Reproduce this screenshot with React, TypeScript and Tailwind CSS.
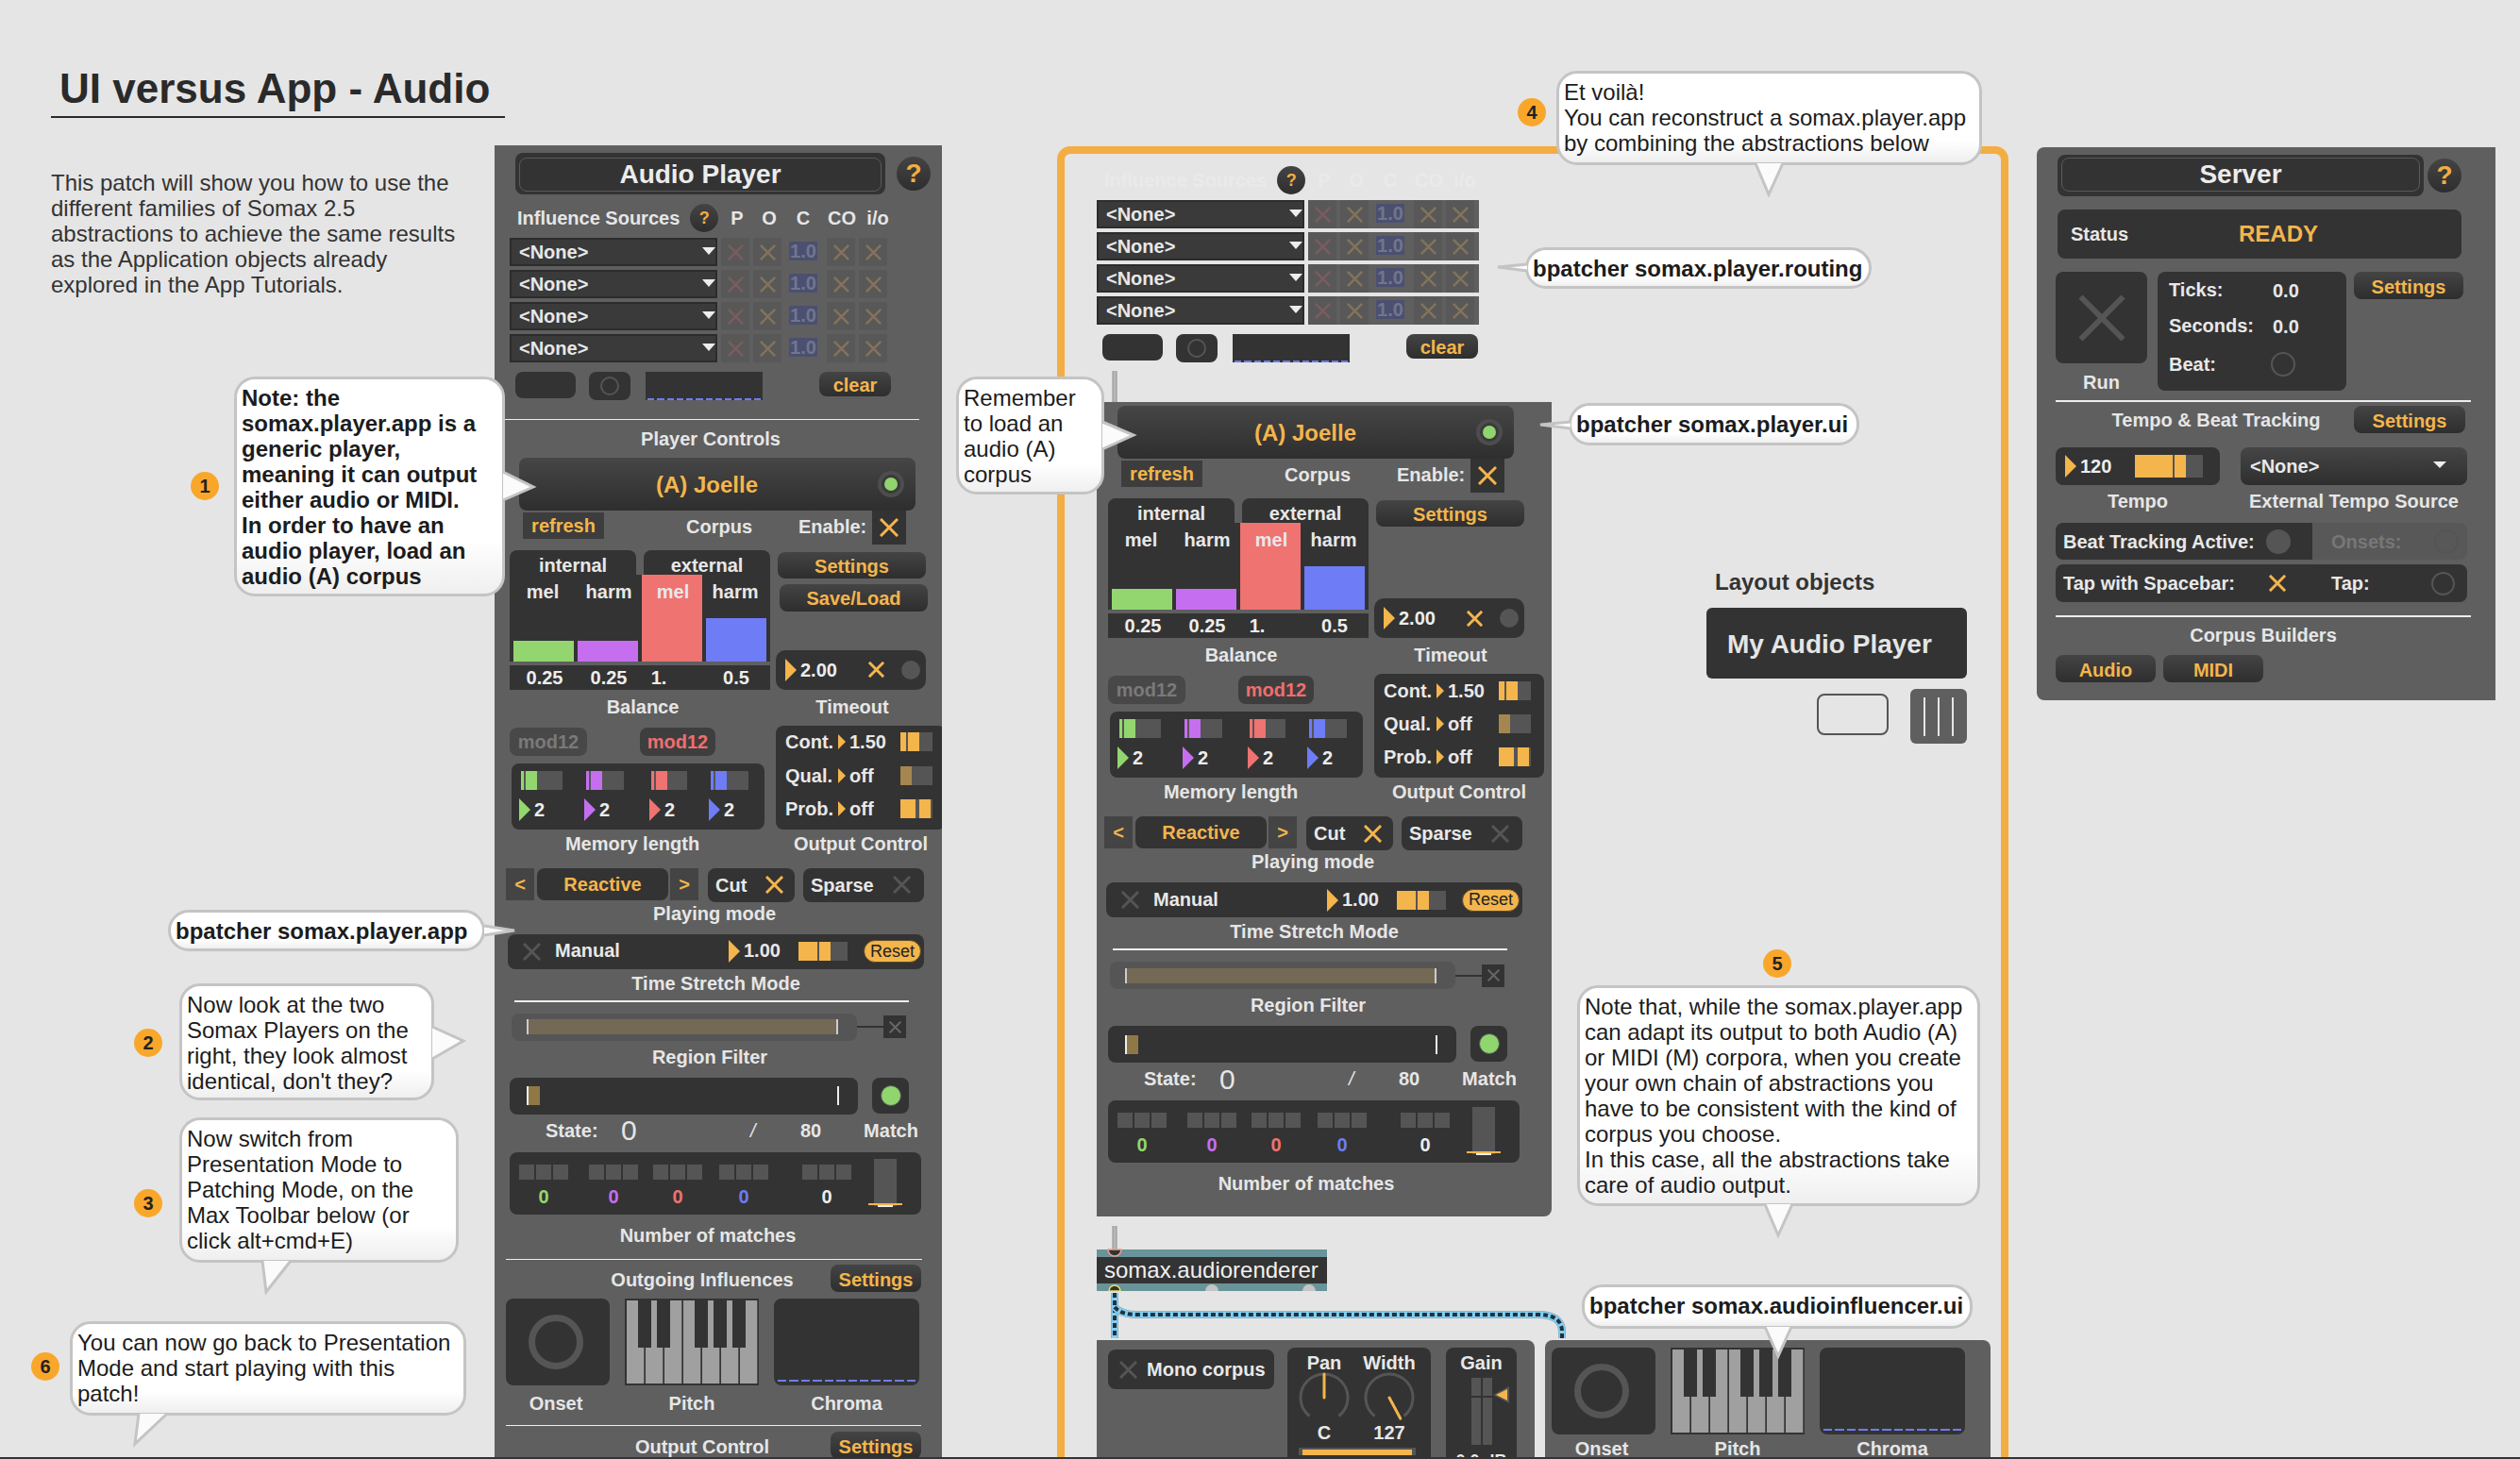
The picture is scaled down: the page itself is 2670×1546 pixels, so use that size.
import type { ReactNode } from "react";

// colours used all over the patch: panel #5f5f5f, controls #333333, accent #f4b54c

function XMark({ size, weight = 3, className }: { size: number; weight?: number; className?: string }) {
  return (
    <svg width={size} height={size} viewBox="0 0 20 20" className={className} aria-hidden="true">
      <path d="M1 1 L19 19 M19 1 L1 19" stroke="currentColor" strokeWidth={(weight * 20) / size} fill="none" />
    </svg>
  );
}

function Tri({ className, w = 12, h = 24 }: { className?: string; w?: number; h?: number }) {
  return (
    <svg width={w} height={h} className={"shrink-0 " + (className ?? "")} aria-hidden="true">
      <polygon points={`0,0 ${w},${h / 2} 0,${h}`} fill="currentColor" />
    </svg>
  );
}

function Caption({ className, children }: { className?: string; children: ReactNode }) {
  return <div className={"h-5 whitespace-nowrap text-center text-[20px] font-bold leading-5 text-[#e6e6e6] " + (className ?? "")}>{children}</div>;
}

function OrangeButton({ className, children }: { className?: string; children: ReactNode }) {
  return (
    <div className={"flex shrink-0 items-center justify-center rounded-lg bg-linear-to-b from-[#444444] to-[#2e2e2e] text-[20px] font-bold text-[#f4b54c] " + (className ?? "")}>
      <span className="translate-y-[1px]">{children}</span>
    </div>
  );
}

function Divider({ className }: { className?: string }) {
  return <div className={"h-[2px] bg-[#ededed] " + (className ?? "")} />;
}

function Ring({ size = 20, className }: { size?: number; className?: string }) {
  return <div style={{ width: size, height: size }} className={"shrink-0 rounded-full border-2 border-[#555555] " + (className ?? "")} />;
}

function Dashes({ className }: { className?: string }) {
  return (
    <div className={"flex gap-[3px] " + (className ?? "")}>
      {Array.from({ length: 12 }).map((_, i) => (
        <div key={i} className="h-[2px] flex-1 bg-[#6e7cf5]" />
      ))}
    </div>
  );
}

function Title({ label, width, textClass }: { label: string; width: string; textClass?: string }) {
  return (
    <div className={"flex h-11 shrink-0 rounded-lg bg-[#333333] p-1 " + width}>
      <div className={"flex flex-1 items-center justify-center rounded-lg border border-[#5a5a5a] text-[28px] font-bold text-[#ececec] " + (textClass ?? "")}>{label}</div>
    </div>
  );
}

function Help({ size }: { size: "lg" | "sm" }) {
  return size === "lg" ? (
    <div className="flex size-9 shrink-0 items-center justify-center rounded-full bg-linear-to-b from-[#444444] to-[#2e2e2e] text-[28px] font-bold text-[#f4ad42]">?</div>
  ) : (
    <div className="flex size-[30px] shrink-0 items-center justify-center rounded-full bg-linear-to-b from-[#444444] to-[#2e2e2e] text-[18px] font-bold text-[#f4ad42]">?</div>
  );
}

function Routing({ faint }: { faint?: boolean }) {
  const head = faint ? "text-[#eaeaea]" : "text-[#e6e6e6]";
  return (
    <div className="flex w-[410px] flex-col">
      <div className={"flex h-[30px] items-center text-[20px] font-bold " + head}>
        <div className="flex w-[224px] items-center pl-2">
          <span className="whitespace-nowrap">Influence Sources</span>
          <span className="ml-[11px]">
            <Help size="sm" />
          </span>
        </div>
        <div className="w-[34px] text-center">P</div>
        <div className="w-[34px] text-center">O</div>
        <div className="w-[38px] text-center">C</div>
        <div className="w-[44px] text-center">CO</div>
        <div className="w-[32px] text-center">i/o</div>
      </div>
      <div className="mt-[6px] flex flex-col gap-1">
        {[0, 1, 2, 3].map((row) => (
          <div key={row} className="flex h-[30px] w-[405px]">
            <div className="relative flex w-[220px] items-center border-2 border-[#2c2c2c] bg-[#3a3a3a] pl-2 text-[20px] font-bold text-[#e8e8e8]">
              &lt;None&gt;
              <svg width="14" height="8" className="absolute right-0 top-[8px]" aria-hidden="true">
                <polygon points="0,0 14,0 7,8" fill="#ededed" />
              </svg>
            </div>
            <div className="ml-1 flex flex-1 bg-[#5f5f5f]">
              <div className="flex w-[30px] items-center justify-center bg-[#585858]">
                <XMark size={17} weight={2.5} className="text-[#7b5c5e]" />
              </div>
              <div className="ml-1 flex w-[30px] items-center justify-center bg-[#585858]">
                <XMark size={17} weight={2.5} className="text-[#83735a]" />
              </div>
              <div className="ml-[8px] flex h-5 w-[30px] translate-y-[4px] items-center justify-center bg-[#4b5070] text-[20px] font-bold text-[#70768c]">1.0</div>
              <div className="ml-[10px] flex w-[30px] items-center justify-center bg-[#585858]">
                <XMark size={17} weight={2.5} className="text-[#83735a]" />
              </div>
              <div className="ml-1 flex w-[30px] items-center justify-center bg-[#585858]">
                <XMark size={17} weight={2.5} className="text-[#83735a]" />
              </div>
            </div>
          </div>
        ))}
      </div>
      <div className="ml-[6px] mt-[10px] flex h-[30px] items-start">
        <div className="h-[28px] w-16 rounded-lg bg-[#333333]" />
        <div className="ml-[14px] flex h-[30px] w-11 items-center justify-center rounded-lg bg-[#333333]">
          <Ring size={20} />
        </div>
        <div className="ml-4 flex h-[30px] w-[124px] flex-col justify-end bg-[#333333] px-[2px]">
          <Dashes />
        </div>
        <OrangeButton className="ml-[60px] h-[26px] w-[76px]">clear</OrangeButton>
      </div>
    </div>
  );
}

function Meter({ children }: { children: ReactNode }) {
  return <div className="flex h-5 shrink-0 bg-[#555555]">{children}</div>;
}

function MemoryCell({ tri, bar, width, fillWidth, className }: { tri: string; bar: string; width: string; fillWidth: string; className?: string }) {
  return (
    <div className={"flex flex-col " + (className ?? "")}>
      <div className={"ml-[2px] " + width}>
        <Meter>
          <div className={"w-[3px] " + bar} />
          <div className={"ml-[2px] " + fillWidth + " " + bar} />
        </Meter>
      </div>
      <div className="mt-[9px] flex items-center">
        <Tri className={tri} />
        <span className="ml-[4px] text-[20px] font-bold leading-6 text-[#ededed]">2</span>
      </div>
    </div>
  );
}

function OutputRow({ label, value, children }: { label: string; value: string; children: ReactNode }) {
  return (
    <div className="flex h-[36px] items-center pl-[10px] text-[20px] font-bold text-[#e8e8e8]">
      <span className="w-[56px]">{label}</span>
      <Tri className="text-[#f4b54c]" w={8} h={16} />
      <span className="ml-1 w-[54px]">{value}</span>
      <div className="w-[34px]">
        <Meter>{children}</Meter>
      </div>
    </div>
  );
}

function MatchCell({ value, tone, className }: { value: string; tone: string; className?: string }) {
  return (
    <div className={"flex w-[52px] flex-col items-center " + (className ?? "")}>
      <div className="flex gap-[2px]">
        <div className="h-4 w-4 bg-[#555555]" />
        <div className="h-4 w-4 bg-[#555555]" />
        <div className="h-4 w-4 bg-[#555555]" />
      </div>
      <div className={"mt-[8px] h-5 text-[20px] font-bold leading-5 " + tone}>{value}</div>
    </div>
  );
}

function PlayerUi({ saveLoad }: { saveLoad?: boolean }) {
  return (
    <div className="flex w-[474px] flex-col pt-1">
      <div className="relative ml-[22px] flex h-14 w-[420px] items-center justify-center rounded-lg bg-linear-to-b from-[#464646] to-[#2e2e2e] text-[24px] font-bold text-[#f4b54c]">
        <span className="-translate-x-[11px] translate-y-[1px]">(A) Joelle</span>
        <div className="absolute right-[12px] top-[14px] flex size-7 items-center justify-center rounded-full bg-[#4d4d4d]">
          <div className="flex size-[20px] items-center justify-center rounded-full bg-[#3a3a3a]">
            <div className="size-[14px] rounded-full bg-[#90d56e]" />
          </div>
        </div>
      </div>
      <div className="flex h-9">
        <div className="ml-[26px] mt-[2px] flex h-[28px] w-[86px] items-center justify-center bg-[#3d3d3d] text-[20px] font-bold text-[#f4b54c]">refresh</div>
        <Caption className="ml-[87px] mt-[7px] w-[66px]">Corpus</Caption>
        <Caption className="ml-[53px] mt-[7px] w-[78px] text-left">Enable:</Caption>
        <div className="flex w-9 items-center justify-center bg-[#333333]">
          <XMark size={20} className="text-[#f4b54c]" />
        </div>
      </div>

      <div className="ml-[12px] mt-[6px] flex">
        <div className="flex w-[276px] flex-col">
          <div className="flex h-[26px] gap-2 text-[20px] font-bold text-[#e8e8e8]">
            <div className="w-[134px] rounded-t-lg bg-[#333333] pt-[6px] text-center leading-5">internal</div>
            <div className="w-[134px] rounded-t-lg bg-[#333333] pt-[6px] text-center leading-5">external</div>
          </div>
          <div className="relative flex h-[92px] items-end gap-1 bg-[#333333] px-1">
            <div className="h-[22px] w-16 bg-[#93d66f]" />
            <div className="h-[22px] w-16 bg-[#c56ff0]" />
            <div className="h-[92px] w-16 bg-[#ee7371]" />
            <div className="h-[46px] w-16 bg-[#6e7cf5]" />
            <div className="absolute left-0 top-[8px] flex text-center text-[20px] font-bold leading-5 text-[#e8e8e8]">
              <div className="w-[70px]">mel</div>
              <div className="w-[70px]">harm</div>
              <div className="w-[66px]">mel</div>
              <div className="w-[66px]">harm</div>
            </div>
          </div>
          <div className="mt-1 flex h-[26px] items-center bg-[#333333] text-center text-[20px] font-bold text-[#ededed]">
            <div className="w-[74px]">0.25</div>
            <div className="w-[62px]">0.25</div>
            <div className="w-[44px]">1.</div>
            <div className="w-[96px] pl-6">0.5</div>
          </div>
        </div>
        <div className="ml-[6px] flex h-[148px] flex-col">
          <OrangeButton className="ml-[2px] mt-[2px] h-[28px] w-[157px]">Settings</OrangeButton>
          {saveLoad ? <OrangeButton className="ml-1 mt-[6px] h-[29px] w-[157px]">Save/Load</OrangeButton> : null}
          <div className="mt-auto flex h-[42px] w-[159px] items-center rounded-[10px] bg-[#333333] pl-[10px] text-[20px] font-bold text-[#ededed]">
            <Tri className="text-[#f4b54c]" />
            <span className="ml-1 w-[60px]">2.00</span>
            <XMark size={17} className="ml-[12px] text-[#f4b54c]" />
            <div className="ml-[18px] size-5 rounded-full bg-[#555555]" />
          </div>
        </div>
      </div>

      <div className="mt-2 flex">
        <Caption className="ml-[12px] w-[276px] pl-[6px]">Balance</Caption>
        <Caption className="ml-[6px] w-[162px]">Timeout</Caption>
      </div>

      <div className="ml-[12px] mt-[10px] flex h-[110px]">
        <div className="flex w-[276px] flex-col">
          <div className="mt-[2px] flex h-[30px] text-[20px] font-bold">
            <div className="flex w-[82px] items-center justify-center rounded-lg bg-[#484848] text-[#7a7a7a]">mod12</div>
            <div className="ml-[56px] flex w-[80px] items-center justify-center rounded-lg bg-[#3e3e3e] text-[#ee6f6f]">mod12</div>
          </div>
          <div className="ml-[2px] mt-2 flex h-[70px] w-[268px] rounded-lg bg-[#333333] pl-[8px] pt-[8px]">
            <MemoryCell tri="text-[#93d66f]" bar="bg-[#93d66f]" width="w-[44px]" fillWidth="w-3" className="w-[70px]" />
            <MemoryCell tri="text-[#c56ff0]" bar="bg-[#c56ff0]" width="w-[40px]" fillWidth="w-3" className="w-[70px]" />
            <MemoryCell tri="text-[#ee7371]" bar="bg-[#ee7371]" width="w-[38px]" fillWidth="w-3" className="w-[64px]" />
            <MemoryCell tri="text-[#6e7cf5]" bar="bg-[#6e7cf5]" width="w-[40px]" fillWidth="w-3" className="w-[60px]" />
          </div>
        </div>
        <div className="ml-[6px] flex w-[180px] flex-col justify-center rounded-lg bg-[#333333] pb-1">
          <OutputRow label="Cont." value="1.50">
            <div className="w-[6px] bg-[#f4b54c]" />
            <div className="ml-[2px] w-3 bg-[#f4b54c]" />
          </OutputRow>
          <OutputRow label="Qual." value="off">
            <div className="w-3 bg-[#a58650]" />
          </OutputRow>
          <OutputRow label="Prob." value="off">
            <div className="w-4 bg-[#f4b54c]" />
            <div className="ml-1 w-3 bg-[#f4b54c]" />
          </OutputRow>
        </div>
      </div>

      <div className="mt-[5px] flex">
        <Caption className="ml-[12px] w-[260px]">Memory length</Caption>
        <Caption className="ml-[22px] w-[180px]">Output Control</Caption>
      </div>

      <div className="ml-[8px] mt-[16px] flex h-9 items-start text-[20px] font-bold">
        <div className="flex h-[34px] w-[30px] items-center justify-center bg-[#444444] text-[#f4b54c]">&lt;</div>
        <div className="ml-[3px] flex h-[34px] w-[139px] items-center justify-center rounded-lg bg-[#333333] text-[#f4b54c]">Reactive</div>
        <div className="ml-[2px] flex h-[34px] w-[30px] items-center justify-center bg-[#444444] text-[#f4b54c]">&gt;</div>
        <div className="ml-[10px] flex h-9 w-[92px] items-center justify-between rounded-lg bg-[#333333] pl-2 pr-[12px] text-[#e8e8e8]">
          Cut
          <XMark size={19} className="text-[#f4b54c]" />
        </div>
        <div className="ml-[9px] flex h-9 w-[128px] items-center justify-between rounded-lg bg-[#333333] pl-2 pr-[14px] text-[#e8e8e8]">
          Sparse
          <XMark size={19} className="text-[#555555]" />
        </div>
      </div>
      <Caption className="ml-[8px] mt-[2px] w-[442px]">Playing mode</Caption>

      <div className="ml-[10px] mt-[12px] flex h-[37px] w-[441px] items-center rounded-lg bg-[#333333] text-[20px] font-bold text-[#e8e8e8]">
        <XMark size={19} className="ml-4 text-[#555555]" />
        <span className="ml-[15px] w-[184px] -translate-y-[1px]">Manual</span>
        <Tri className="text-[#f4b54c]" />
        <span className="ml-1 w-[58px] -translate-y-[1px]">1.00</span>
        <div className="w-[52px]">
          <Meter>
            <div className="w-5 bg-[#f4b54c]" />
            <div className="ml-[2px] w-3 bg-[#f4b54c]" />
          </Meter>
        </div>
        <div className="ml-[17px] flex h-6 w-[61px] items-center justify-center rounded-full border border-[#5a4a2a] bg-[#f4b54c] text-[18px] font-normal text-[#222222]">Reset</div>
      </div>
      <Caption className="ml-[10px] mt-[5px] w-[441px]">Time Stretch Mode</Caption>

      <Divider className="ml-[17px] mt-2 w-[418px]" />

      <div className="ml-[14px] mt-3 flex items-center">
        <div className="flex h-[29px] w-[366px] items-center rounded-lg bg-[#555555] pl-4">
          <div className="h-4 w-[330px] border-x-2 border-[#cccccc] bg-[#736955]" />
        </div>
        <div className="h-[2px] w-7 bg-[#333333]" />
        <div className="flex size-6 items-center justify-center bg-[#333333]">
          <XMark size={13} weight={2} className="text-[#666666]" />
        </div>
      </div>
      <Caption className="ml-[14px] mt-[7px] w-[420px]">Region Filter</Caption>

      <div className="ml-[12px] mt-[12px] flex">
        <div className="flex h-[39px] w-[369px] items-center rounded-lg bg-[#333333] pl-[18px]">
          <div className="h-5 w-[2px] bg-[#ededed]" />
          <div className="h-5 w-3 bg-[#8f7845]" />
          <div className="ml-[315px] h-5 w-[2px] bg-[#ededed]" />
        </div>
        <div className="ml-[15px] flex h-[38px] w-[39px] items-center justify-center rounded-lg bg-[#333333]">
          <div className="size-[22px] rounded-full border border-[#555555] bg-[#90d56e]" />
        </div>
      </div>
      <div className="mt-[7px] flex h-5 items-center text-[20px] font-bold text-[#e6e6e6]">
        <span className="ml-[50px] w-[80px]">State:</span>
        <span className="w-[17px] text-[30px] font-normal">0</span>
        <span className="ml-[120px] w-[53px] text-[20px] font-normal italic">/</span>
        <span className="w-[60px]">80</span>
        <span className="w-[72px] text-center">Match</span>
      </div>

      <div className="ml-[12px] mt-[13px] flex h-[66px] w-[436px] items-start rounded-lg bg-[#333333] pl-[10px] pt-[13px]">
        <MatchCell value="0" tone="text-[#93d66f]" />
        <MatchCell value="0" tone="text-[#c56ff0]" className="ml-[22px]" />
        <MatchCell value="0" tone="text-[#ee7371]" className="ml-[16px]" />
        <MatchCell value="0" tone="text-[#6e7cf5]" className="ml-[18px]" />
        <MatchCell value="0" tone="text-[#ededed]" className="ml-[36px]" />
        <div className="relative -mt-[6px] ml-[24px] h-[50px] w-6 bg-[#555555]">
          <div className="absolute -left-[6px] bottom-[1px] h-[2px] w-9 bg-[#f4b54c]" />
          <div className="absolute -bottom-[1px] left-1 h-[2px] w-4 bg-[#ededed]" />
        </div>
      </div>
      <Caption className="ml-[12px] mt-[12px] w-[420px]">Number of matches</Caption>
    </div>
  );
}

function Keyboard() {
  const black = [14, 34, 74, 94, 114];
  return (
    <svg width="142" height="92" className="ml-4 mr-4 block shrink-0" aria-hidden="true">
      <rect width="142" height="92" fill="#333333" />
      {[0, 1, 2, 3, 4, 5, 6].map((i) => (
        <rect key={i} x={2 + i * 20} y={2} width={18.3} height={88} fill="#a0a0a0" />
      ))}
      {black.map((x) => (
        <rect key={x} x={x} y={0} width={14} height={52} fill="#333333" />
      ))}
    </svg>
  );
}

function Influences({ captionGap }: { captionGap: string }) {
  return (
    <div className="flex w-[440px] flex-col">
      <div className="flex h-[92px]">
        <div className="flex w-[110px] items-center justify-center rounded-lg bg-[#333333] pr-1">
          <div className="size-[58px] rounded-full border-[7px] border-[#555555]" />
        </div>
        <Keyboard />
        <div className="flex w-[154px] flex-col justify-end rounded-lg bg-[#333333] px-1 pb-1">
          <Dashes />
        </div>
      </div>
      <div className={"flex " + captionGap}>
        <Caption className="w-[110px] pr-1">Onset</Caption>
        <Caption className="ml-4 w-[142px]">Pitch</Caption>
        <Caption className="ml-4 w-[154px]">Chroma</Caption>
      </div>
    </div>
  );
}

function Dial({ angle }: { angle: number }) {
  const rad = (angle * Math.PI) / 180;
  return (
    <svg width="54" height="54" viewBox="-27 -27 54 54" className="block" aria-hidden="true">
      <path d="M -15.5 19.5 A 25 25 0 1 1 15.5 19.5" fill="none" stroke="#555555" strokeWidth="3" />
      <line x1="0" y1="0" x2={Math.sin(rad) * 25} y2={-Math.cos(rad) * 25} stroke="#f4b54c" strokeWidth="3" strokeLinecap="round" />
    </svg>
  );
}

function Callout({ pos, bold, lines }: { pos: string; bold?: boolean; lines: string[] }) {
  return (
    <div
      className={
        "absolute whitespace-nowrap rounded-[22px] border-[3px] border-[#c4c4c4] bg-linear-to-b from-white from-75% to-[#efefef] pl-[5px] pt-[6px] text-[24px] leading-[27px] text-[#1c1c1c] " +
        (bold ? "font-bold " : "") +
        pos
      }
    >
      {lines.map((l) => (
        <div key={l}>{l}</div>
      ))}
    </div>
  );
}

function Badge({ pos, n }: { pos: string; n: number }) {
  return <div className={"absolute flex h-[30px] w-[30px] items-center justify-center rounded-full bg-[#f9a72b] text-[20px] font-bold text-[#222222] " + pos}>{n}</div>;
}

// tails of the speech bubbles, abs canvas coordinates: base, tip, base
const tails: [number, number, number, number, number, number][] = [
  [533, 500, 565, 516, 533, 530],
  [513, 981, 545, 986, 513, 991],
  [458, 1088, 491, 1103, 458, 1122],
  [278, 1336, 282, 1369, 308, 1336],
  [147, 1498, 143, 1530, 177, 1498],
  [1860, 173, 1874, 206, 1889, 173],
  [1618, 280, 1587, 283, 1618, 287],
  [1664, 447, 1632, 450, 1664, 454],
  [1168, 447, 1201, 461, 1168, 476],
  [1870, 1276, 1884, 1309, 1899, 1276],
  [1870, 1406, 1884, 1437, 1898, 1406],
];

function Overlay() {
  return (
    <svg width="2670" height="1546" className="pointer-events-none absolute left-0 top-0" aria-hidden="true">
      {tails.map((t, i) => (
        <g key={i}>
          <polygon points={`${t[0]},${t[1]} ${t[2]},${t[3]} ${t[4]},${t[5]}`} fill="#fbfbfb" />
          <polyline points={`${t[0]},${t[1]} ${t[2]},${t[3]} ${t[4]},${t[5]}`} fill="none" stroke="#c4c4c4" strokeWidth="3" />
        </g>
      ))}
      <line x1="1181" y1="393" x2="1181" y2="426" stroke="#8f8f8f" strokeWidth="5" />
      <line x1="1181" y1="393" x2="1181" y2="426" stroke="#b8b8b8" strokeWidth="3" />
      <line x1="1181" y1="1299" x2="1181" y2="1325" stroke="#8f8f8f" strokeWidth="5" />
      <line x1="1181" y1="1299" x2="1181" y2="1325" stroke="#b8b8b8" strokeWidth="3" />
      <path d="M1174 1324 A7 7 0 0 0 1188 1324 Z" fill="#333333" stroke="#e8a090" strokeWidth="1.5" />
      <path d="M1175 1368 A6 6 0 0 1 1187 1368 Z" fill="#333333" stroke="#e8e070" strokeWidth="1.5" />
      <path d="M1277 1368 A7 7 0 0 1 1291 1368 Z" fill="#c4c4c4" />
      <path d="M1380 1368 A7 7 0 0 1 1394 1368 Z" fill="#c4c4c4" />
      {["M1181 1370 L1181 1418", "M1181 1385 C1186 1391 1194 1393 1205 1393 L1630 1393 C1646 1393 1655 1399 1655 1411 L1655 1418"].map((d) => (
        <g key={d} fill="none">
          <path d={d} stroke="#8a9aa2" strokeWidth="8" />
          <path d={d} stroke="#7fd0f7" strokeWidth="7" />
          <path d={d} stroke="#22313a" strokeWidth="4" strokeDasharray="5 3" />
        </g>
      ))}
    </svg>
  );
}

function ServerPanel() {
  return (
    <div className="absolute left-[2158px] top-[156px] flex h-[586px] w-[486px] flex-col rounded-l-lg bg-[#5f5f5f] pt-2">
      <div className="ml-[22px] flex items-center">
        <Title label="Server" width="w-[388px]" textClass="-translate-y-[1px]" />
        <div className="ml-1">
          <Help size="lg" />
        </div>
      </div>
      <div className="ml-[22px] mt-[14px] flex h-[52px] w-[428px] items-center rounded-lg bg-[#333333] pl-[14px] text-[20px] font-bold text-[#e8e8e8]">
        <span className="w-[178px]">Status</span>
        <span className="text-[24px] text-[#f4b54c]">READY</span>
      </div>

      <div className="ml-[20px] mt-[14px] flex h-[126px] items-start">
        <div className="flex w-[97px] flex-col">
          <div className="flex h-[97px] items-center justify-center rounded-lg bg-[#333333]">
            <XMark size={50} weight={6} className="text-[#555555]" />
          </div>
          <Caption className="mt-[10px]">Run</Caption>
        </div>
        <div className="ml-[11px] flex h-[126px] w-[200px] flex-col gap-[18px] rounded-lg bg-[#333333] pl-3 pt-[9px] text-[20px] font-bold leading-5 text-[#e8e8e8]">
          <div className="flex">
            <span className="w-[110px]">Ticks:</span>
            <span className="translate-y-[1px]">0.0</span>
          </div>
          <div className="flex">
            <span className="w-[110px]">Seconds:</span>
            <span className="translate-y-[1px]">0.0</span>
          </div>
          <div className="flex items-center">
            <span className="w-[108px]">Beat:</span>
            <Ring size={26} />
          </div>
        </div>
        <OrangeButton className="ml-2 h-[29px] w-[116px]">Settings</OrangeButton>
      </div>

      <Divider className="ml-[20px] mt-[10px] w-[440px]" />

      <div className="ml-[20px] mt-1 flex items-center">
        <Caption className="w-[316px] pl-6">Tempo &amp; Beat Tracking</Caption>
        <OrangeButton className="h-[29px] w-[118px]">Settings</OrangeButton>
      </div>

      <div className="ml-[20px] mt-[15px] flex h-10">
        <div className="flex w-[174px] items-center rounded-lg bg-[#333333] pl-[10px] text-[20px] font-bold text-[#ededed]">
          <Tri className="text-[#f4b54c]" />
          <span className="ml-1 w-[58px]">120</span>
          <div className="flex h-6 w-[72px] bg-[#555555]">
            <div className="w-10 bg-[#f4b54c]" />
            <div className="ml-[2px] w-3 bg-[#f4b54c]" />
          </div>
        </div>
        <div className="relative ml-[22px] flex w-[240px] items-center rounded-lg bg-linear-to-b from-[#464646] to-[#2e2e2e] pl-[10px] text-[20px] font-bold text-[#e8e8e8]">
          &lt;None&gt;
          <svg width="14" height="7" className="absolute right-[22px] top-[15px]" aria-hidden="true">
            <polygon points="0,0 14,0 7,7" fill="#ededed" />
          </svg>
        </div>
      </div>
      <div className="ml-[20px] mt-[7px] flex">
        <Caption className="w-[174px]">Tempo</Caption>
        <Caption className="ml-[22px] w-[240px]">External Tempo Source</Caption>
      </div>

      <div className="ml-[20px] mt-[13px] flex h-[39px] w-[436px] text-[20px] font-bold">
        <div className="flex w-[272px] items-center rounded-l-lg bg-[#333333] pl-2 text-[#e8e8e8]">
          <span className="w-[215px]">Beat Tracking Active:</span>
          <div className="size-[26px] rounded-full bg-[#555555]" />
        </div>
        <div className="flex flex-1 items-center rounded-r-lg bg-[#585858] pl-5 text-[#777777]">
          <span className="w-[109px]">Onsets:</span>
          <Ring size={26} className="border-[#4f4f4f]" />
        </div>
      </div>
      <div className="ml-[20px] mt-[5px] flex h-10 w-[436px] items-center rounded-lg bg-[#333333] pl-2 text-[20px] font-bold text-[#e8e8e8]">
        <span className="w-[218px]">Tap with Spacebar:</span>
        <XMark size={18} className="text-[#f4b54c]" />
        <span className="ml-[48px] w-[106px]">Tap:</span>
        <Ring size={25} />
      </div>

      <Divider className="ml-[20px] mt-[14px] w-[440px]" />
      <Caption className="ml-[20px] mt-[9px] w-[440px]">Corpus Builders</Caption>
      <div className="ml-[20px] mt-[11px] flex gap-2">
        <OrangeButton className="h-[29px] w-[106px]">Audio</OrangeButton>
        <OrangeButton className="h-[29px] w-[106px]">MIDI</OrangeButton>
      </div>
    </div>
  );
}

export default function App() {
  return (
    <div className="relative h-[1546px] w-[2670px] overflow-hidden bg-[#e5e5e5] font-['Liberation_Sans',Arial,sans-serif]">
      {/* left column: heading and intro */}
      <div className="absolute left-[54px] top-[69px] w-[481px] border-b-2 border-[#2a2a2a] pb-[4px] pl-[9px] text-[44px] font-bold leading-[50px] text-[#2a2a2a]">
        UI versus App - Audio
      </div>
      <div className="absolute left-[54px] top-[180px] whitespace-nowrap text-[24px] leading-[27px] text-[#333333]">
        <div>This patch will show you how to use the</div>
        <div>different families of Somax 2.5</div>
        <div>abstractions to achieve the same results</div>
        <div>as the Application objects already</div>
        <div>explored in the App Tutorials.</div>
      </div>

      {/* bpatcher somax.player.app */}
      <div className="absolute left-[524px] top-[154px] flex h-[1392px] w-[474px] flex-col overflow-hidden bg-[#5f5f5f] pt-2">
        <div className="ml-[22px] flex items-center">
          <Title label="Audio Player" width="w-[392px]" textClass="translate-y-[1px]" />
          <div className="ml-[12px]">
            <Help size="lg" />
          </div>
        </div>
        <div className="ml-[16px] mt-[10px]">
          <Routing />
        </div>
        <Divider className="ml-[11px] mt-[20px] w-[439px]" />
        <Caption className="ml-[11px] mt-[10px] w-[436px]">Player Controls</Caption>
        <div className="ml-1 mt-[6px]">
          <PlayerUi saveLoad />
        </div>
        <Divider className="ml-[12px] mt-[15px] w-[441px]" />
        <div className="ml-[12px] mt-[6px] flex w-[440px] items-start">
          <Caption className="mt-[6px] w-[344px] pl-[72px]">Outgoing Influences</Caption>
          <OrangeButton className="h-[29px] w-[96px]">Settings</OrangeButton>
        </div>
        <div className="ml-[12px] mt-[7px]">
          <Influences captionGap="mt-[9px]" />
        </div>
        <Divider className="ml-[12px] mt-[13px] w-[440px]" />
        <div className="ml-[12px] mt-[6px] flex w-[440px] items-start">
          <Caption className="mt-[6px] w-[344px] pl-[72px]">Output Control</Caption>
          <OrangeButton className="h-[29px] w-[96px]">Settings</OrangeButton>
        </div>
      </div>

      {/* orange presentation frame */}
      <div className="absolute left-[1120px] top-[155px] h-[1500px] w-[1008px] rounded-[14px] border-[8px] border-[#f4ad42]" />

      <div className="absolute left-[1162px] top-[176px]">
        <Routing faint />
      </div>

      <div className="absolute left-[1162px] top-[426px] h-[863px] w-[482px] rounded-br-lg bg-[#5f5f5f]">
        <PlayerUi />
      </div>

      <div className="absolute left-[1162px] top-[1324px] flex h-[44px] w-[244px] flex-col justify-center bg-[#68949a]">
        <div className="flex h-[28px] items-center bg-[#333333] pl-[8px] text-[24px] text-[#f0f0f0]">somax.audiorenderer</div>
      </div>

      {/* somax.audiooutput */}
      <div className="absolute left-[1162px] top-[1420px] flex h-[126px] w-[464px] items-start overflow-hidden rounded-tr-lg bg-[#5f5f5f]">
        <div className="ml-[12px] mt-[10px] flex h-[42px] w-[176px] items-center rounded-lg bg-[#333333] text-[20px] font-bold text-[#e8e8e8]">
          <XMark size={19} className="ml-[12px] text-[#555555]" />
          <span className="ml-[10px] whitespace-nowrap">Mono corpus</span>
        </div>
        <div className="ml-[14px] mt-2 flex h-[130px] w-[152px] flex-col rounded-lg bg-[#333333] text-[20px] font-bold text-[#e8e8e8]">
          <div className="flex pt-[6px]">
            <div className="ml-[8px] flex w-[62px] flex-col items-center">
              <span className="leading-5">Pan</span>
              <Dial angle={0} />
              <span className="leading-5">C</span>
            </div>
            <div className="ml-[7px] flex w-[62px] flex-col items-center">
              <span className="leading-5">Width</span>
              <Dial angle={152} />
              <span className="leading-5">127</span>
            </div>
          </div>
          <div className="ml-[12px] mt-[6px] h-[8px] w-[124px] bg-[#555555] px-1 pt-[2px]">
            <div className="h-full bg-[#f4b54c]" />
          </div>
        </div>
        <div className="ml-[16px] mt-2 flex h-[130px] w-[75px] flex-col items-center rounded-lg bg-[#333333] text-[20px] font-bold text-[#e8e8e8]">
          <span className="mt-[6px] leading-5">Gain</span>
          <div className="relative mt-[6px] flex h-[72px] w-[22px] justify-between">
            <div className="w-[10px] bg-[#555555]" />
            <div className="w-[10px] bg-[#555555]" />
            <div className="absolute left-0 top-[19px] h-[2px] w-full bg-[#333333]" />
            <svg width="18" height="18" className="absolute -right-[18px] top-[9px]" aria-hidden="true">
              <polygon points="18,0 18,18 1,9" fill="#555555" />
              <polygon points="16,3 16,15 4,9" fill="#f4b54c" />
            </svg>
          </div>
          <span className="mt-[7px] whitespace-nowrap text-[18px] leading-5">0.0 dB</span>
        </div>
      </div>

      {/* somax.audioinfluencer.ui */}
      <div className="absolute left-[1637px] top-[1420px] h-[126px] w-[472px] overflow-hidden rounded-t-lg bg-[#5f5f5f] pl-[7px] pt-2">
        <Influences captionGap="mt-[5px]" />
      </div>

      {/* layout objects */}
      <div className="absolute left-[1817px] top-[603px] text-[24px] font-bold leading-7 text-[#333333]">Layout objects</div>
      <div className="absolute left-[1808px] top-[644px] flex h-[75px] w-[276px] items-center rounded-md bg-[#333333] pl-[22px] pt-[2px] text-[28px] font-bold text-[#e5e5e5]">My Audio Player</div>
      <div className="absolute left-[1925px] top-[735px] h-[44px] w-[76px] rounded-lg border-2 border-[#555555]" />
      <div className="absolute left-[2024px] top-[730px] flex h-[58px] w-[60px] items-center justify-around rounded-md bg-[#5f5f5f] px-[8px]">
        <div className="h-[41px] w-[2px] bg-[#e5e5e5]" />
        <div className="h-[41px] w-[2px] bg-[#e5e5e5]" />
        <div className="h-[41px] w-[2px] bg-[#e5e5e5]" />
      </div>

      <ServerPanel />

      {/* comments */}
      <Callout
        pos="left-[248px] top-[399px] h-[233px] w-[287px]"
        bold
        lines={["Note: the", "somax.player.app is a", "generic player,", "meaning it can output", "either audio or MIDI.", "In order to have an", "audio player, load an", "audio (A) corpus"]}
      />
      <Callout pos="left-[178px] top-[964px] h-[44px] w-[336px]" bold lines={["bpatcher somax.player.app"]} />
      <Callout pos="left-[190px] top-[1042px] h-[124px] w-[270px]" lines={["Now look at the two", "Somax Players on the", "right, they look almost", "identical, don't they?"]} />
      <Callout pos="left-[190px] top-[1184px] h-[154px] w-[296px]" lines={["Now switch from", "Presentation Mode to", "Patching Mode, on the", "Max Toolbar below (or", "click alt+cmd+E)"]} />
      <Callout pos="left-[74px] top-[1400px] h-[100px] w-[420px]" lines={["You can now go back to Presentation", "Mode and start playing with this", "patch!"]} />
      <Callout pos="left-[1649px] top-[75px] h-[100px] w-[451px]" lines={["Et voilà!", "You can reconstruct a somax.player.app", "by combining the abstractions below"]} />
      <Callout pos="left-[1616px] top-[262px] h-[44px] w-[367px]" bold lines={["bpatcher somax.player.routing"]} />
      <Callout pos="left-[1662px] top-[427px] h-[45px] w-[308px]" bold lines={["bpatcher somax.player.ui"]} />
      <Callout pos="left-[1013px] top-[399px] h-[125px] w-[157px]" lines={["Remember", "to load an", "audio (A)", "corpus"]} />
      <Callout
        pos="left-[1671px] top-[1044px] h-[234px] w-[427px]"
        lines={["Note that, while the somax.player.app", "can adapt its output to both Audio (A)", "or MIDI (M) corpora, when you create", "your own chain of abstractions you", "have to be consistent with the kind of", "corpus you choose.", "In this case, all the abstractions take", "care of audio output."]}
      />
      <Callout pos="left-[1676px] top-[1361px] h-[47px] w-[414px]" bold lines={["bpatcher somax.audioinfluencer.ui"]} />

      <Overlay />

      <Badge pos="left-[202px] top-[500px]" n={1} />
      <Badge pos="left-[142px] top-[1090px]" n={2} />
      <Badge pos="left-[142px] top-[1260px]" n={3} />
      <Badge pos="left-[1608px] top-[104px]" n={4} />
      <Badge pos="left-[1868px] top-[1006px]" n={5} />
      <Badge pos="left-[33px] top-[1433px]" n={6} />

      <div className="absolute bottom-0 left-0 h-[2px] w-full bg-[#333333]" />
    </div>
  );
}
